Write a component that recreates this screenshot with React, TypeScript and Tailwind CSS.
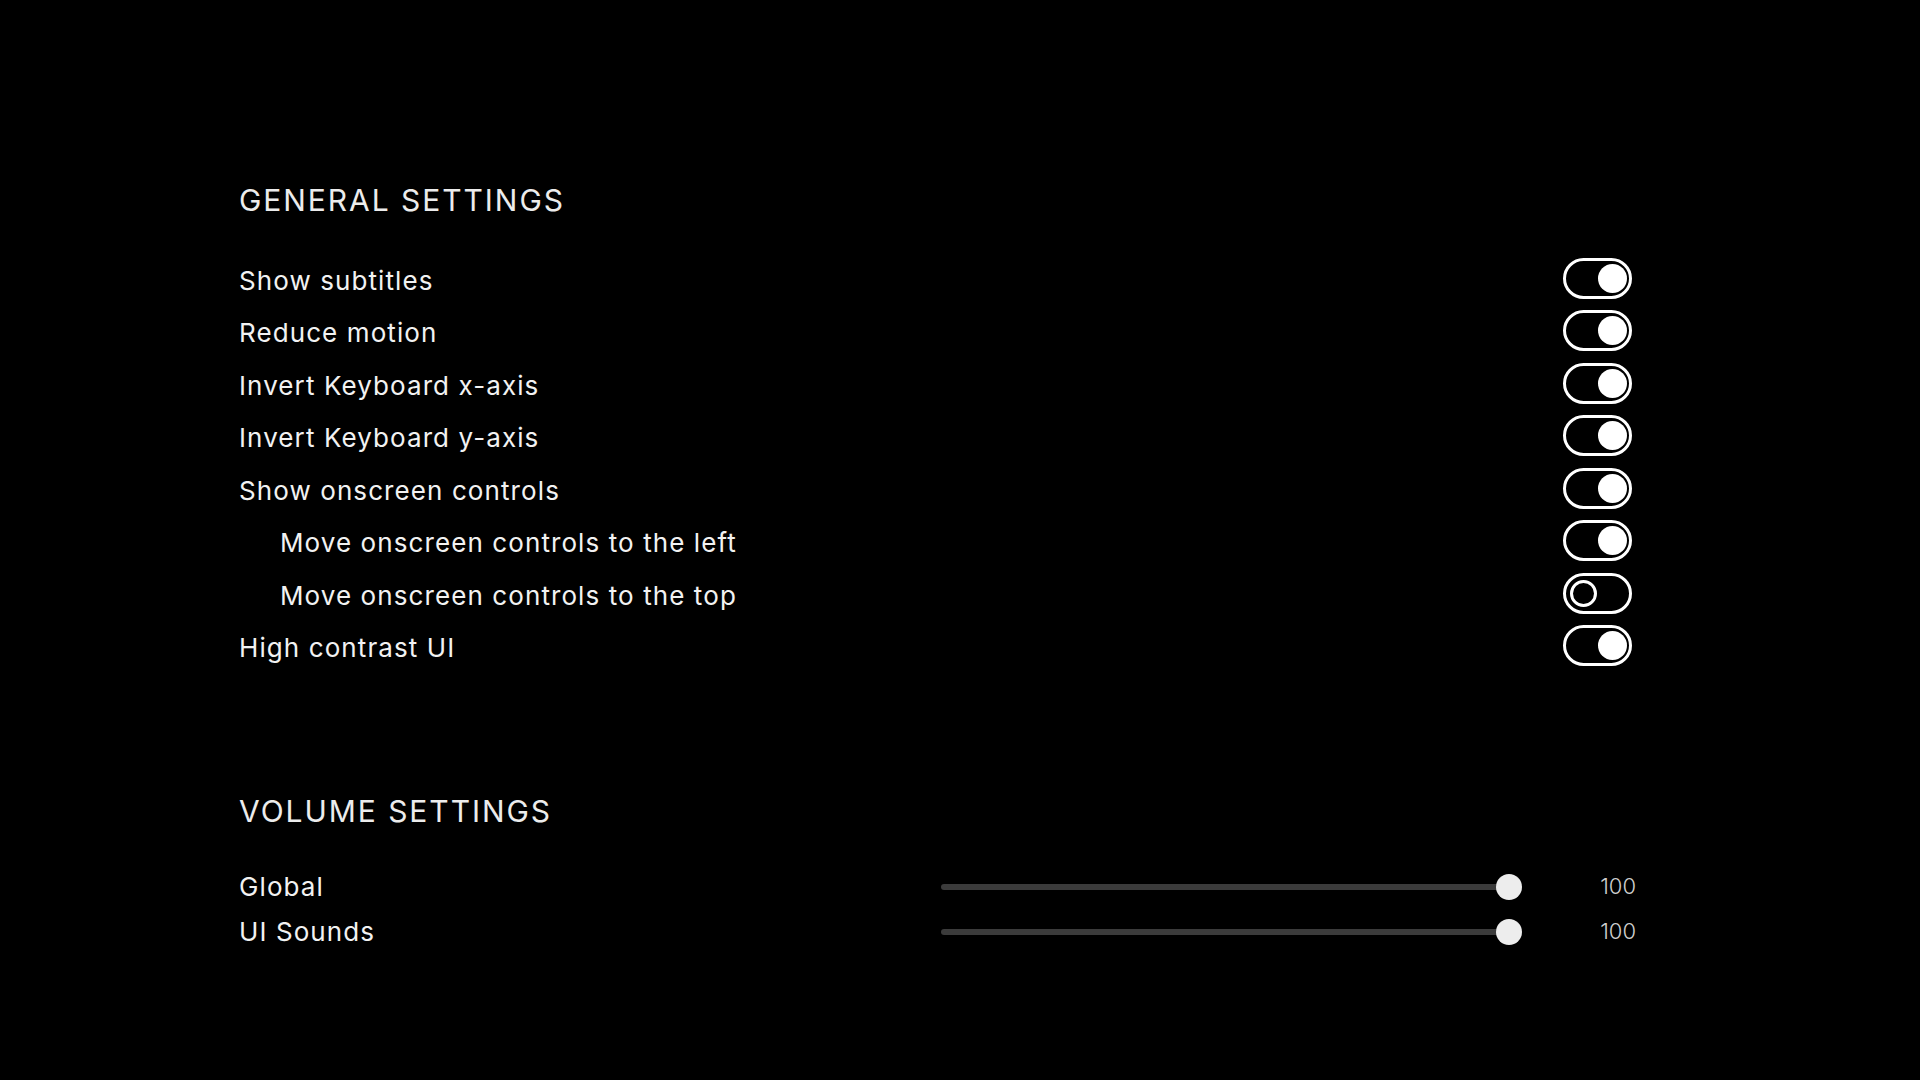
import React from 'react';

const generalSettings = [
  { label: 'Show subtitles', on: true, indent: false },
  { label: 'Reduce motion', on: true, indent: false },
  { label: 'Invert Keyboard x-axis', on: true, indent: false },
  { label: 'Invert Keyboard y-axis', on: true, indent: false },
  { label: 'Show onscreen controls', on: true, indent: false },
  { label: 'Move onscreen controls to the left', on: true, indent: true },
  { label: 'Move onscreen controls to the top', on: false, indent: true },
  { label: 'High contrast UI', on: true, indent: false },
];

const volumeSettings = [
  { label: 'Global', value: 100 },
  { label: 'UI Sounds', value: 100 },
];

function Toggle({ on }: { on: boolean }) {
  return (
    <div
      className={`mr-[4px] mb-[4px] flex h-[41px] w-[69px] items-center rounded-full border-[3.5px] border-white ${
        on ? 'justify-end pr-[2.5px]' : 'justify-start pl-[3.5px]'
      }`}
    >
      {on ? (
        <div className="h-[29px] w-[29px] rounded-full bg-white" />
      ) : (
        <div className="h-[27px] w-[27px] rounded-full border-[3px] border-white" />
      )}
    </div>
  );
}

function Slider({ value }: { value: number }) {
  return (
    <div className="relative flex h-[26px] w-[581px] items-center">
      <div className="h-[6px] w-[570px] rounded-full bg-[#3b3b3b]" />
      <div
        className="absolute top-0 h-[26px] w-[26px] rounded-full bg-[#ededed]"
        style={{ left: `${(value / 100) * 555}px` }}
      />
    </div>
  );
}

export default function App() {
  return (
    <div
      className="min-h-screen w-full bg-black text-[#f2f2f2]"
      style={{ fontFamily: 'Inter, Lato, sans-serif' }}
    >
      <div className="w-[1636px] pl-[239px] pt-[180px]">
        {/* General */}
        <h2 className="h-[40px] text-[30px] leading-[40px] tracking-[0.065em] text-[#ececec]">
          GENERAL SETTINGS
        </h2>
        <div className="mt-[34px]">
          {generalSettings.map((item) => (
            <div key={item.label} className="flex h-[52.5px] items-center justify-between">
              <span className={`text-[26px] tracking-[0.042em] ${item.indent ? 'pl-[41px]' : ''}`}>{item.label}</span>
              <Toggle on={item.on} />
            </div>
          ))}
        </div>

        {/* Volume */}
        <h2 className="mt-[117px] h-[40px] text-[30px] leading-[40px] tracking-[0.065em] text-[#ececec]">
          VOLUME SETTINGS
        </h2>
        <div className="mt-[33px]">
          {volumeSettings.map((item) => (
            <div key={item.label} className="flex h-[45px] items-center">
              <span className="w-[702px] text-[26px] tracking-[0.042em]">{item.label}</span>
              <Slider value={item.value} />
              <span className="flex-1 text-right text-[22px] font-light text-[#cfcfcf]">{item.value}</span>
            </div>
          ))}
        </div>
      </div>
    </div>
  );
}
